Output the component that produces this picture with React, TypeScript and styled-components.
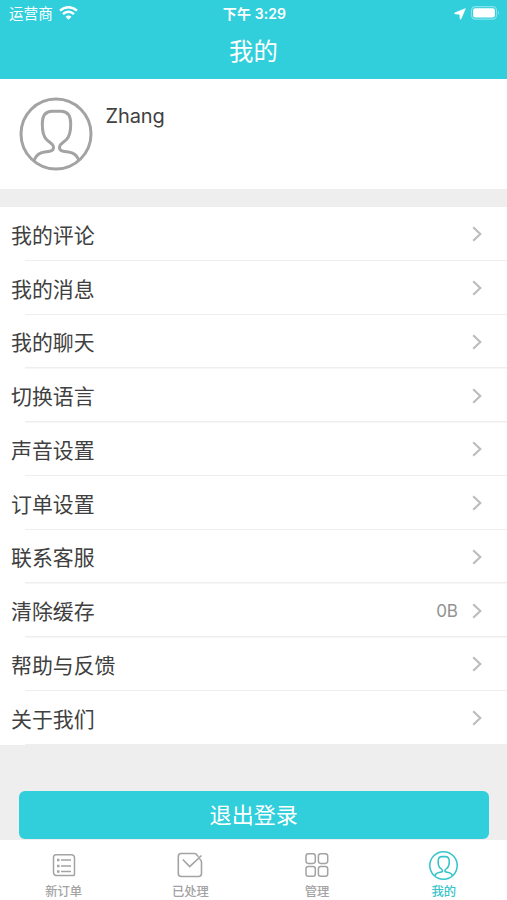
import React from 'react';
import styled, { createGlobalStyle } from 'styled-components';

const GlobalStyle = createGlobalStyle`
  * { box-sizing: border-box; }
  body {
    margin: 0;
    background: #eeeeee;
    font-family: Inter, 'Noto Sans CJK SC', sans-serif;
    color: #404040;
  }
`;

const Screen = styled.div`
  width: 507px;
  height: 900px;
  display: flex;
  flex-direction: column;
  background: #eeeeee;
  overflow: hidden;
`;

const Header = styled.header`
  height: 79.4px;
  flex: none;
  background: #30cfdb;
  color: #fff;
`;

const StatusBar = styled.div`
  height: 27px;
  padding: 0 7px 0 9px;
  display: grid;
  grid-template-columns: 1fr auto 1fr;
  align-items: center;
  font-size: 14.5px;
  line-height: 26px;
`;

const StatusGroup = styled.div<{ $end?: boolean }>`
  display: flex;
  align-items: center;
  gap: ${(p) => (p.$end ? 4 : 6)}px;
  justify-content: ${(p) => (p.$end ? 'flex-end' : 'flex-start')};
`;

const Clock = styled.span`
  font-size: 14px;
  font-weight: 600;
  letter-spacing: 0.1px;
`;

const Carrier = styled.span`
  padding-top: 1px;
  font-size: 14.6px;
`;

const Title = styled.h1`
  margin: 0;
  height: 48px;
  line-height: 48px;
  font-size: 24.4px;
  font-weight: 400;
  text-align: center;
`;

const Profile = styled.section`
  height: 109.6px;
  flex: none;
  padding: 17.6px 19px;
  display: flex;
  gap: 12.5px;
  background: #fff;
`;

const UserName = styled.span`
  margin-top: 5.5px;
  font-size: 20px;
  line-height: 28px;
  letter-spacing: -0.1px;
`;

const List = styled.ul`
  margin: 18px 0 0;
  padding: 0.6px 0 0;
  list-style: none;
  flex: none;
  background: #fff;
`;

const Row = styled.li`
  height: 53.75px;
  padding: 0 25px 0 11px;
  display: flex;
  align-items: center;
  background: linear-gradient(#eeeeee, #eeeeee) 25px 100% / 100% 1.5px no-repeat;
`;

const RowLabel = styled.span`
  flex: 1;
  font-size: 20.9px;
  line-height: 30px;
  padding-top: 2.6px;
`;

const RowValue = styled.span`
  margin-right: 14px;
  padding-top: 1px;
  font-size: 17px;
  color: #929292;
`;

const Logout = styled.button`
  height: 48.5px;
  flex: none;
  margin: 45.8px 18.5px 0 19px;
  padding: 0;
  border: 0;
  border-radius: 6px;
  background: #30cfdb;
  color: #fff;
  font: inherit;
  font-size: 22.1px;
  line-height: 48px;
`;

const TabBar = styled.nav`
  height: 60px;
  flex: none;
  margin-top: auto;
  display: grid;
  grid-template-columns: repeat(4, 1fr);
  background: #fff;
`;

const Tab = styled.div<{ $active?: boolean }>`
  display: flex;
  flex-direction: column;
  align-items: center;
  padding: 11px 0 0 0.5px;
  color: ${(p) => (p.$active ? '#38c5ca' : '#a3a3a3')};
`;

const TabIcon = styled.span`
  height: 28px;
  display: flex;
  justify-content: center;
`;

const TabLabel = styled.span`
  margin-top: 3px;
  font-size: 12.3px;
  font-weight: 500;
  line-height: 20px;
`;

const PersonSvg = styled.svg`
  flex: none;
`;

const PersonIcon = ({ size, color, stroke }: { size: number; color: string; stroke: number }) => (
  <PersonSvg width={size} height={size} viewBox="0 0 74 74" fill="none" stroke={color} strokeWidth={stroke} strokeLinejoin="round">
    <circle cx="37" cy="37" r="35" />
    <path d="M15 63.500C17.500 57 21 55.500 25.500 55C31 54.500 34.500 54 34.500 50.500C34.500 46.500 30.500 45.500 27.500 42.500C24 39 23.300 34 23.300 27C23.300 18 26.500 14.300 33 14.300H42C48.500 14.300 51.700 18 51.700 27C51.700 34 51 39 47.500 42.500C44.500 45.500 40.500 46.500 40.500 50.500C40.500 54 44 54.500 49.500 55C54 55.500 57.500 57 60 63.500" />
  </PersonSvg>
);

const WifiIcon = () => (
  <svg width="19" height="15" viewBox="0 0 19 15" fill="none" stroke="#fff" strokeWidth="2.500">
    <path d="M1 4.700C6 0 13 0 18 4.700" />
    <path d="M4 8.100C7.200 5.100 11.800 5.100 15 8.100" />
    <path d="M6.500 10.700Q9.500 8.100 12.500 10.700L9.500 13.700Z" fill="#fff" stroke="none" />
  </svg>
);

const LocationIcon = () => (
  <svg width="12" height="12" viewBox="0 0 12 12" fill="#fff" stroke="#fff" strokeWidth=".8" strokeLinejoin="round">
    <path d="M11.300.7L6.900 10.900Q6.500 11.500 6.200 10.900L5.900 6.200L.8 5.700Q.2 5.300.8 4.900Z" />
  </svg>
);

const BatteryIcon = () => (
  <svg width="30" height="15" viewBox="0 0 30 15">
    <rect x="1.500" y=".6" width="25" height="12.500" rx="3.800" fill="none" stroke="#84e3e9" strokeWidth="1.200" />
    <rect x="3.100" y="2.300" width="21.800" height="9.200" rx="2.200" fill="#fff" />
    <path d="M28 4.800Q30 6.850 28 8.900Z" fill="#84e3e9" />
  </svg>
);

const Chevron = () => (
  <svg width="10" height="16" viewBox="0 0 10 16" fill="none" stroke="#bdbdbd" strokeWidth="2.200">
    <path d="M1.200 1.200L8.300 8L1.200 14.800" />
  </svg>
);

const OrderIcon = () => (
  <svg width="28" height="28" viewBox="0 0 28 28" fill="none" stroke="currentColor" strokeWidth="1.500">
    <path d="M6 3.800H21Q24.500 3.800 24.500 7V21Q24.500 24.500 24 24.500H6.500Q3.500 24.500 3.500 21V6.500Q3.500 3.800 6 3.800Z" />
    <path d="M11 9H21M11 15H21M11 20.400H21" />
    <path d="M7 9H9.500M7 15H9.500M7 20.400H9.500" strokeWidth="2.500" />
  </svg>
);

const DoneIcon = () => (
  <svg width="28" height="28" viewBox="0 0 28 28" fill="none" stroke="currentColor" strokeWidth="1.600">
    <path d="M22.500 5.700L20 3Q19.500 2.500 18.500 2.500H5Q2.300 2.500 2.300 5.500V22.500Q2.300 25.500 5.300 25.500H22.500Q25.500 25.500 25.500 22.500V11Q25.500 9.500 23.300 7.500" />
    <path d="M6.800 8.500L13.700 15.600L25.500 4.500" />
  </svg>
);

const ManageIcon = () => (
  <svg width="28" height="28" viewBox="0 0 28 28" fill="none" stroke="currentColor" strokeWidth="1.500">
    <rect x="3" y="2.700" width="9.300" height="9.700" rx="2.300" />
    <rect x="15.400" y="2.700" width="9.300" height="9.700" rx="2.300" />
    <rect x="3" y="15.500" width="9.300" height="9.700" rx="2.300" />
    <rect x="15.400" y="15.500" width="9.300" height="9.700" rx="2.300" />
  </svg>
);

const rows: { label: string; value?: string }[] = [
  { label: '我的评论' },
  { label: '我的消息' },
  { label: '我的聊天' },
  { label: '切换语言' },
  { label: '声音设置' },
  { label: '订单设置' },
  { label: '联系客服' },
  { label: '清除缓存', value: '0B' },
  { label: '帮助与反馈' },
  { label: '关于我们' },
];

const tabs = [
  { label: '新订单', icon: <OrderIcon /> },
  { label: '已处理', icon: <DoneIcon /> },
  { label: '管理', icon: <ManageIcon /> },
  { label: '我的', icon: <PersonIcon size={29} color="currentColor" stroke={4} />, active: true },
];

export default function App() {
  return (
    <Screen>
      <GlobalStyle />
      <Header>
        <StatusBar>
          <StatusGroup>
            <Carrier>运营商</Carrier>
            <WifiIcon />
          </StatusGroup>
          <Clock>下午 3:29</Clock>
          <StatusGroup $end>
            <LocationIcon />
            <BatteryIcon />
          </StatusGroup>
        </StatusBar>
        <Title>我的</Title>
      </Header>
      <Profile>
        <PersonIcon size={74} color="#a3a3a3" stroke={3} />
        <UserName>Zhang</UserName>
      </Profile>
      <List>
        {rows.map((row) => (
          <Row key={row.label}>
            <RowLabel>{row.label}</RowLabel>
            {row.value && <RowValue>{row.value}</RowValue>}
            <Chevron />
          </Row>
        ))}
      </List>
      <Logout>退出登录</Logout>
      <TabBar>
        {tabs.map((tab) => (
          <Tab key={tab.label} $active={tab.active}>
            <TabIcon>{tab.icon}</TabIcon>
            <TabLabel>{tab.label}</TabLabel>
          </Tab>
        ))}
      </TabBar>
    </Screen>
  );
}
